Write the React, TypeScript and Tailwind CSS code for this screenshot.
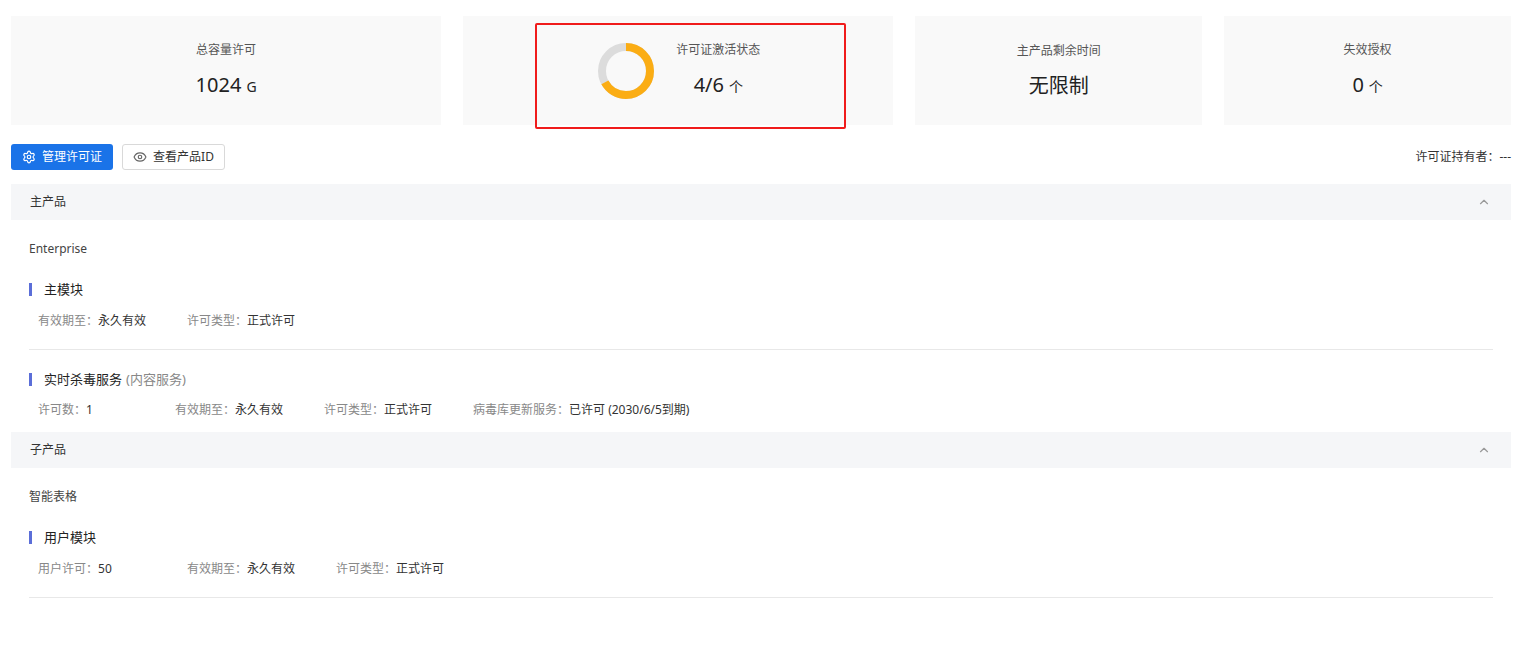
import { ChevronUp, Eye, Settings } from "lucide-react";

const font = { fontFamily: '"Noto Sans", "Noto Sans CJK SC", sans-serif' };

function Donut() {
  const r = 24;
  const c = 2 * Math.PI * r;
  return (
    <svg width="60" height="60" viewBox="0 0 60 60">
      <circle cx="30" cy="30" r={r} fill="none" stroke="#dcdcdc" strokeWidth="8" />
      <circle
        cx="30"
        cy="30"
        r={r}
        fill="none"
        stroke="#fbad14"
        strokeWidth="8"
        strokeDasharray={`${(c * 4) / 6} ${c}`}
        transform="rotate(-90 30 30)"
      />
    </svg>
  );
}

function Stat({ label, value, unit, big }: { label: string; value: string; unit?: string; big?: boolean }) {
  return (
    <div className="flex flex-col items-center">
      <div className="text-[12px] text-[#555]">{label}</div>
      <div className="mt-[12px] text-[20px] leading-[28px] text-[#222]">
        {value}
        {unit && <span className={`ml-[5px] ${big ? "text-[14px]" : "text-[14px]"}`}>{unit}</span>}
      </div>
    </div>
  );
}

function SectionHeader({ title }: { title: string }) {
  return (
    <div className="flex h-[36px] items-center justify-between bg-[#f5f6f8] px-[19px] text-[12px] text-[#333]">
      <span>{title}</span>
      <ChevronUp size={14} className="mr-[1px] text-[#999]" />
    </div>
  );
}

function Module({ title, sub, items }: { title: string; sub?: string; items: { k: string; v: string; w: number }[] }) {
  return (
    <div className="border-b border-[#e8e8e8] pb-[19px]">
      <div className="flex items-center text-[13px] text-[#222]">
        <span className="mr-[12px] h-[13px] w-[3px] bg-[#5b6ed8]" />
        {title}
        {sub && <span className="ml-[4px] text-[#888]">{sub}</span>}
      </div>
      <div className="mt-[12px] flex pl-[9px] text-[12px]">
        {items.map((it) => (
          <div key={it.k} style={{ width: it.w }}>
            <span className="text-[#888]">{it.k}：</span>
            <span className="text-[#333]">{it.v}</span>
          </div>
        ))}
      </div>
    </div>
  );
}

export default function App() {
  return (
    <div className="min-h-[668px] bg-white px-[11px] pt-[16px] pr-[6px]" style={font}>
      <div className="flex gap-[22px]">
        <div className="flex h-[109px] flex-[3] items-center justify-center bg-[#f9f9f9]">
          <Stat label="总容量许可" value="1024" unit="G" />
        </div>
        <div className="relative flex h-[109px] flex-[3] items-center justify-center bg-[#f9f9f9]">
          <div className="absolute left-[72px] top-[7px] h-[106px] w-[311px] rounded-[2px] border-2 border-[#f01c1c]" />
          <div className="flex items-center gap-[20px]">
            <Donut />
            <Stat label="许可证激活状态" value="4/6" unit="个" />
          </div>
        </div>
        <div className="flex h-[109px] flex-[2] items-center justify-center bg-[#f9f9f9]">
          <Stat label="主产品剩余时间" value="无限制" />
        </div>
        <div className="flex h-[109px] flex-[2] items-center justify-center bg-[#f9f9f9]">
          <Stat label="失效授权" value="0" unit="个" />
        </div>
      </div>

      <div className="mt-[19px] flex items-center justify-between">
        <div className="flex gap-[9px]">
          <button className="flex h-[26px] w-[102px] items-center justify-center gap-[6px] rounded-[3px] bg-[#1a73e8] text-[12px] text-white">
            <Settings size={14} />
            管理许可证
          </button>
          <button className="flex h-[26px] w-[103px] items-center justify-center gap-[6px] rounded-[3px] border border-[#d9d9d9] bg-white text-[12px] text-[#333]">
            <Eye size={14} className="text-[#666]" />
            查看产品ID
          </button>
        </div>
        <div className="text-[12px] text-[#333]">许可证持有者：---</div>
      </div>

      <div className="mt-[14px]">
        <SectionHeader title="主产品" />
        <div className="px-[18px]">
          <div className="pt-[20px] text-[12px] text-[#444]">Enterprise</div>
          <div className="mt-[22px]">
            <Module
              title="主模块"
              items={[
                { k: "有效期至", v: "永久有效", w: 149 },
                { k: "许可类型", v: "正式许可", w: 150 },
              ]}
            />
          </div>
          <div className="mt-[20px] pb-[0px]">
            <div className="[&>div]:border-b-0 [&>div]:pb-[13px]">
              <Module
                title="实时杀毒服务"
                sub="(内容服务)"
                items={[
                  { k: "许可数", v: "1", w: 137 },
                  { k: "有效期至", v: "永久有效", w: 149 },
                  { k: "许可类型", v: "正式许可", w: 149 },
                  { k: "病毒库更新服务", v: "已许可 (2030/6/5到期)", w: 260 },
                ]}
              />
            </div>
          </div>
        </div>
        <SectionHeader title="子产品" />
        <div className="px-[18px]">
          <div className="pt-[20px] text-[12px] text-[#444]">智能表格</div>
          <div className="mt-[22px]">
            <Module
              title="用户模块"
              items={[
                { k: "用户许可", v: "50", w: 149 },
                { k: "有效期至", v: "永久有效", w: 149 },
                { k: "许可类型", v: "正式许可", w: 150 },
              ]}
            />
          </div>
        </div>
      </div>
    </div>
  );
}
